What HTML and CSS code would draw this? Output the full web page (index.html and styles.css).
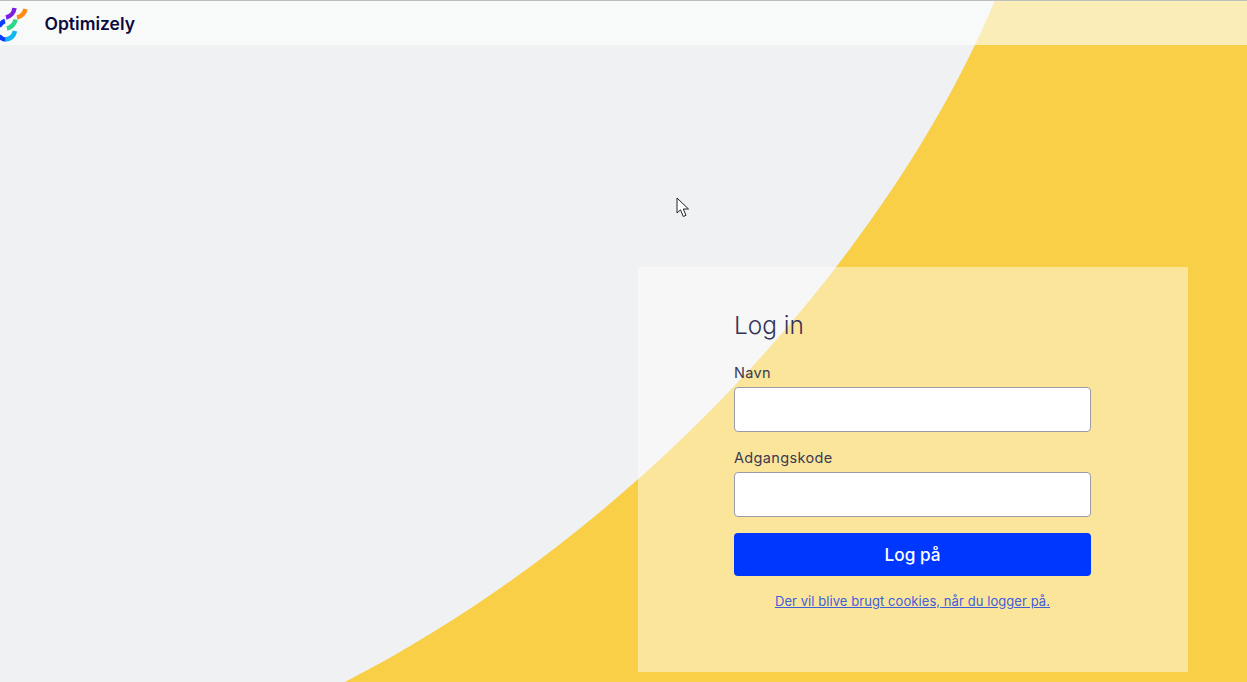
FILE: index.html
```html
<!DOCTYPE html>
<html lang="da">
<head>
    <meta charset="UTF-8">
    <meta name="viewport" content="width=device-width, initial-scale=1.0">
    <title>Log in</title>
    <link rel="stylesheet" href="styles.css">
</head>
<body>
    <svg class="swoosh" viewBox="0 0 1247 682" aria-hidden="true">
        <path d="M995 0C900 230 660 520 345 682H1247V0Z" fill="#f8cf47"/>
    </svg>

    <header class="topbar">
        <svg class="logo" viewBox="0 0 34 44" aria-hidden="true">
            <g fill="none" stroke-width="4.500">
                <path d="M14.500 7C14 11.500 10.500 15.500 6 16.500" stroke="#7a22e0"/>
                <path d="M25.500 8C24.500 12 21.500 15.500 17 16.500" stroke="#ff8a14"/>
                <path d="M5 20C3 20.500 1 22 -1 25.500" stroke="#0b3cff"/>
                <path d="M15.500 18.500C15 22.500 11.500 26.500 7 27.500" stroke="#2bd88a"/>
                <path d="M15 30C14 34.500 10.500 38 5.500 38.500" stroke="#12b5f5"/>
                <path d="M5.500 38.500C3 38.500 1 37 -1 35" stroke="#0b3cff"/>
            </g>
        </svg>
        <span class="brand">Optimizely</span>
    </header>

    <main class="content">
        <form class="login">
            <h1>Log in</h1>
            <label class="field">
                <span>Navn</span>
                <input type="text">
            </label>
            <label class="field">
                <span>Adgangskode</span>
                <input type="password">
            </label>
            <button type="button">Log på</button>
            <a class="cookies" href="#">Der vil blive brugt cookies, når du logger på.</a>
        </form>
    </main>

    <svg class="pointer" viewBox="0 0 14 21" aria-hidden="true">
        <path d="M1 1V16L4.500 12.800L7.300 19.500L10 18.300L7.300 12H12.500Z" fill="#fff" stroke="#222" stroke-width="1"/>
    </svg>
</body>
</html>
```

FILE: styles.css
```css
* {
    box-sizing: border-box;
}
body {
    margin: 0;
    height: 682px;
    overflow: hidden;
    position: relative;
    background-color: #f0f1f3;
    font-family: Inter, 'Noto Sans', sans-serif;
    color: #3a3a55;
}
.swoosh {
    position: absolute;
    top: 0;
    left: 0;
    width: 1247px;
    height: 682px;
}
.pointer {
    position: absolute;
    left: 676px;
    top: 197px;
    width: 14px;
    height: 21px;
}
.topbar {
    position: relative;
    height: 45px;
    display: flex;
    align-items: center;
    gap: 10.500px;
    background-color: rgba(254, 255, 253, 0.62);
    border-top: 1px solid #bdbfbf;
}
.logo {
    width: 34px;
    height: 44px;
    margin-top: -1px;
    flex-shrink: 0;
}
.brand {
    font-size: 17.500px;
    font-weight: 600;
    color: #0a0a3c;
}
.content {
    position: relative;
    display: flex;
    justify-content: flex-end;
    padding: 222px 59px 0 0;
}
.login {
    width: 550px;
    height: 405px;
    padding: 42px 97px 0 96px;
    display: flex;
    flex-direction: column;
    background-color: rgba(255, 255, 255, 0.45);
}
.login h1 {
    margin: 0 0 22px;
    font-size: 24.400px;
    line-height: 32px;
    font-weight: 300;
    color: #33335a;
}
.field {
    display: flex;
    flex-direction: column;
    margin-bottom: 16px;
}
.field span {
    font-size: 14.500px;
    line-height: 20px;
    margin-bottom: 4px;
    letter-spacing: 0.35px;
}
.field input {
    height: 45px;
    border: 1px solid #9a9aa8;
    border-radius: 4px;
    background-color: #fff;
}
.login button {
    height: 43px;
    border: none;
    border-radius: 4px;
    background-color: #0037ff;
    color: #fff;
    font-family: inherit;
    font-size: 17.200px;
    font-weight: 500;
}
.cookies {
    margin-top: 16px;
    text-align: center;
    font-size: 13px;
    line-height: 18px;
    letter-spacing: 0.07px;
    color: #3f5fd8;
}
```
